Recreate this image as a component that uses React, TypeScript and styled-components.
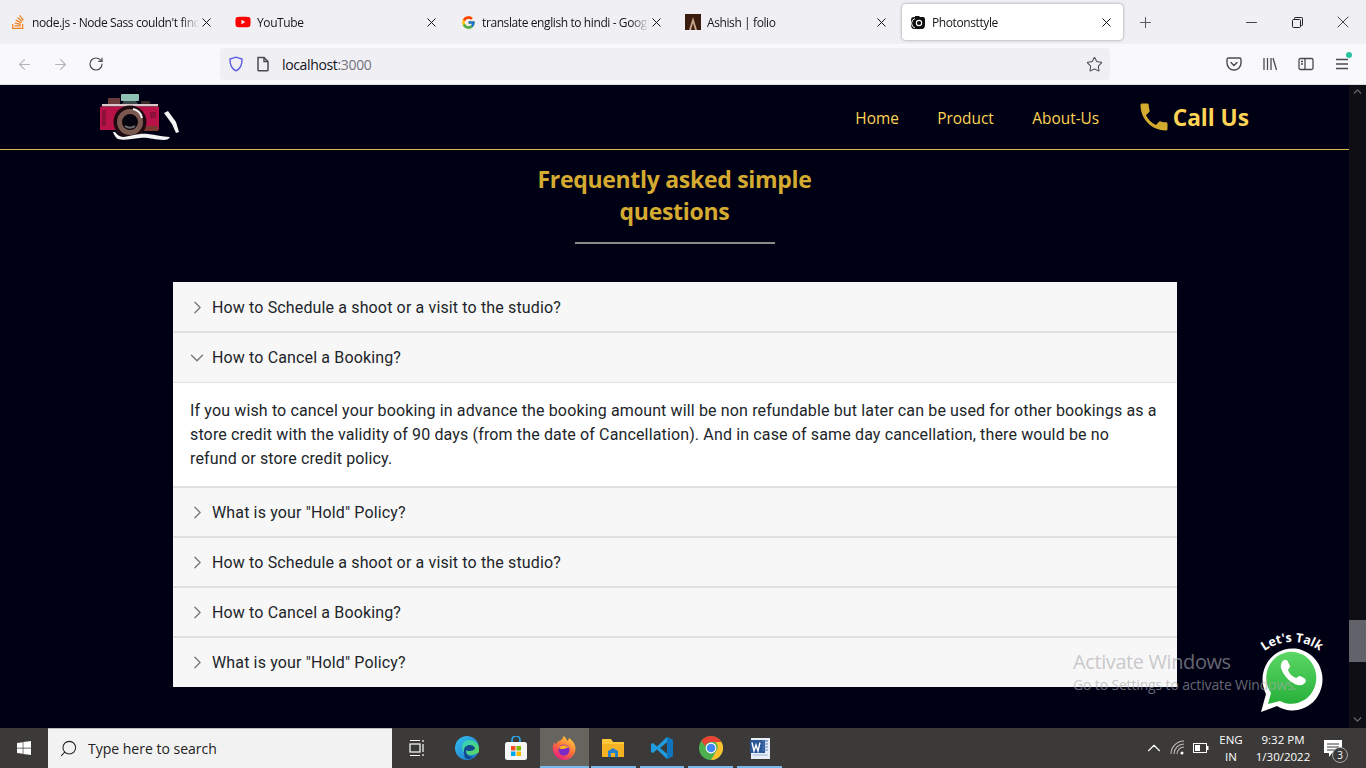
import React from "react";
import styled, { createGlobalStyle } from "styled-components";
import { ChevronRight, ChevronDown, X, Plus, Minus, ArrowLeft, ArrowRight, RotateCw, Star, Search, ChevronUp } from "lucide-react";
import { FaStackOverflow, FaYoutube, FaWindows } from "react-icons/fa";
import { FcGoogle } from "react-icons/fc";
import { MdPhone } from "react-icons/md";

const GlobalStyle = createGlobalStyle`
  html, body { margin: 0; padding: 0; height: 100%; overflow: hidden; background: #000014; }
  * { box-sizing: border-box; }
`;

const Screen = styled.div`
  width: 1366px;
  height: 768px;
  position: relative;
  overflow: hidden;
  display: flex;
  flex-direction: column;
  font-family: "Open Sans", "Liberation Sans", sans-serif;
`;

/* browser chrome */
const TabStrip = styled.div`
  height: 44px;
  flex: none;
  background: #f0f0f4;
  display: flex;
  align-items: center;
  padding: 0 0 0 2px;
`;

const Tab = styled.div<{ $active?: boolean }>`
  width: ${(p) => (p.$active ? "221px" : "225px")};
  height: 36px;
  flex: none;
  display: flex;
  align-items: center;
  gap: 6px;
  padding: 0 ${(p) => (p.$active ? "9px" : "13px")} 0 8px;
  margin-right: ${(p) => (p.$active ? "14px" : "0")};
  border-radius: 4px;
  background: ${(p) => (p.$active ? "#fff" : "transparent")};
  box-shadow: ${(p) => (p.$active ? "0 0 3px rgba(0,0,0,.4)" : "none")};
  color: #15141a;
  font-size: 12px;
`;

const TabIcon = styled.span<{ $color?: string }>`
  width: 16px;
  height: 16px;
  flex: none;
  display: flex;
  align-items: center;
  justify-content: center;
  color: ${(p) => p.$color || "#15141a"};
`;

const TabTitle = styled.span`
  flex: 1;
  min-width: 0;
  white-space: nowrap;
  overflow: hidden;
  letter-spacing: -0.4px;
  mask-image: linear-gradient(to left, transparent 0, #000 18px);
`;

const TabClose = styled(X)`
  flex: none;
  margin-left: -6px;
  color: #15141a;
`;

const NewTab = styled(Plus)`
  flex: none;
  color: #5b5b66;
`;

const WindowButtons = styled.div`
  margin-left: auto;
  display: flex;
  align-items: center;
  color: #222;
`;

const WindowButton = styled.span`
  width: 46px;
  height: 30px;
  display: flex;
  align-items: center;
  justify-content: center;
`;

const Toolbar = styled.div`
  height: 41px;
  flex: none;
  background: #f9f9fb;
  border-bottom: 1px solid #dcdce0;
  display: flex;
  align-items: center;
  padding: 0 0 0 15px;
  color: #5b5b66;
`;

const NavButton = styled.span<{ $muted?: boolean }>`
  width: 36px;
  display: flex;
  justify-content: flex-start;
  padding-left: 1px;
  color: ${(p) => (p.$muted ? "#b4b4ba" : "#4a4a52")};
`;

const UrlBar = styled.div`
  width: 890px;
  height: 32px;
  margin-left: 97px;
  background: #f0f0f4;
  border-radius: 4px;
  display: flex;
  align-items: center;
  padding: 0 7px 0 8px;
  font-size: 14px;
  letter-spacing: -0.35px;
  color: #15141a;
`;

const UrlIcon = styled.span<{ $gap: number }>`
  display: flex;
  margin-right: ${(p) => p.$gap}px;
`;

const UrlHost = styled.span`
  flex: 1;
`;

const UrlPort = styled.span`
  color: #74747c;
`;

const ToolIcons = styled.div`
  display: flex;
  align-items: center;
  margin-left: 116px;
  gap: 20px;
`;

const MenuWrap = styled.span`
  position: relative;
  display: flex;
`;

const MenuDot = styled.span`
  position: absolute;
  top: -4px;
  right: -2px;
  width: 6px;
  height: 6px;
  border-radius: 50%;
  background: #2ac3a2;
`;

/* page */
const Viewport = styled.div`
  flex: 1;
  min-height: 0;
  display: flex;
  background: #000014;
`;

const Page = styled.div`
  flex: 1;
  min-width: 0;
`;

const Header = styled.header`
  height: 65px;
  border-bottom: 1px solid #dcb94e;
  display: flex;
  align-items: center;
  padding: 0 100px 0 100px;
`;

const Links = styled.nav`
  margin-left: auto;
  display: flex;
  align-items: center;
  gap: 38.5px;
  font-size: 15.4px;
  color: #fed455;
`;

const NavLink = styled.span`
  padding-top: 2px;
`;

const CallUs = styled.div`
  display: flex;
  align-items: center;
  gap: 5px;
  margin-left: 3px;
  font-size: 22.7px;
  font-weight: 700;
  color: #fed455;
`;

const PhoneIcon = styled(MdPhone)`
  margin: 0 -4px 0 -5px;
  color: #d3ac2f;
`;

const Title = styled.h2`
  width: 300px;
  margin: 13px auto 0;
  font-size: 23px;
  line-height: 32px;
  font-weight: 700;
  letter-spacing: -0.3px;
  text-align: center;
  color: #d4ab30;
`;

const Rule = styled.div`
  width: 200px;
  height: 2px;
  margin: 15px auto 38px;
  background: #8a8a8a;
`;

const Accordion = styled.div`
  width: 1004px;
  margin-left: 173px;
  font-family: Roboto, sans-serif;
  font-size: 16px;
  letter-spacing: 0.14px;
  color: #212529;
`;

const Question = styled.div<{ $open?: boolean; $first?: boolean; $last?: boolean }>`
  height: ${(p) => (p.$first ? "51px" : p.$last ? "49px" : "50px")};
  display: flex;
  align-items: center;
  gap: 8px;
  padding-left: 17px;
  padding-top: ${(p) => (p.$first ? "1px" : "0")};
  background: #f7f7f7;
  border-bottom: ${(p) => (p.$last ? "0" : p.$open ? "1px solid #e2e2e2" : "2px solid #e0e0e0")};
`;

const Caret = styled.span`
  width: 14px;
  display: flex;
  justify-content: center;
  color: #777;
`;

const CaretRight = styled(ChevronRight)`
  flex: none;
`;

const CaretDown = styled(ChevronDown)`
  flex: none;
`;

const Answer = styled.div`
  height: 105px;
  padding: 16px 19px 0 17px;
  line-height: 24px;
  background: #fff;
  border-bottom: 2px solid #e0e0e0;
`;

const Scrollbar = styled.div`
  width: 17px;
  flex: none;
  background: #0e0e14;
  display: flex;
  flex-direction: column;
  align-items: center;
  color: #6a6a70;
`;

const ScrollThumb = styled.div`
  width: 17px;
  height: 42px;
  margin-top: 522px;
  background: #62626a;
`;

const ScrollEnd = styled.div`
  margin-top: auto;
  display: flex;
  height: 17px;
  align-items: center;
`;

const Watermark = styled.div`
  position: absolute;
  left: 1073px;
  top: 649px;
  color: rgba(170, 170, 175, 0.62);
  font-size: 14px;
  line-height: 19px;
  letter-spacing: -0.15px;
  white-space: nowrap;
  pointer-events: none;
`;

const WatermarkTitle = styled.div`
  font-size: 20px;
  line-height: 26px;
  letter-spacing: -0.4px;
`;

const Chat = styled.div`
  position: absolute;
  left: 1255px;
  top: 628px;
  width: 74px;
  height: 88px;
`;

/* taskbar */
const Taskbar = styled.div`
  height: 40px;
  flex: none;
  background: #3b3a38;
  display: flex;
  align-items: center;
  color: #fff;
`;

const StartButton = styled.span`
  width: 48px;
  display: flex;
  justify-content: center;
`;

const SearchBox = styled.div`
  width: 344px;
  height: 40px;
  background: #f2f2f2;
  border-top: 1px solid #bbb;
  display: flex;
  align-items: center;
  gap: 10px;
  padding-left: 11px;
  color: #222;
  font-size: 14px;
`;

const SearchIcon = styled(Search)`
  transform: scaleX(-1);
`;

const TaskApp = styled.span<{ $running?: boolean; $focused?: boolean }>`
  width: 48.8px;
  height: 40px;
  flex: none;
  position: relative;
  display: flex;
  align-items: center;
  justify-content: center;
  background: ${(p) => (p.$focused ? "#66645f" : "transparent")};

  &::after {
    content: "";
    display: ${(p) => (p.$running ? "block" : "none")};
    position: absolute;
    left: ${(p) => (p.$focused ? "0" : "2px")};
    right: ${(p) => (p.$focused ? "0" : "2px")};
    bottom: 0;
    height: 2px;
    background: #76b9ed;
  }
`;

const TaskViewSlot = styled(TaskApp)`
  width: 50.5px;
`;

const Tray = styled.div`
  margin-left: auto;
  padding-right: 17px;
  display: flex;
  align-items: center;
  font-size: 11.5px;
`;

const TrayIcon = styled.span<{ $w: number }>`
  width: ${(p) => p.$w}px;
  display: flex;
  justify-content: center;
`;

const TrayText = styled.div<{ $w: number }>`
  width: ${(p) => p.$w}px;
  text-align: center;
  line-height: 17px;
`;

const Badge = styled.span`
  position: absolute;
  right: 1px;
  bottom: -6px;
  width: 16px;
  height: 16px;
  border-radius: 50%;
  border: 1px solid #aaa;
  background: #3b3a38;
  font-size: 10px;
  line-height: 14px;
  text-align: center;
`;

const Notify = styled.span`
  width: 32px;
  position: relative;
  display: flex;
  justify-content: center;
`;

const Shield = () => (
  <svg width="16" height="16" viewBox="0 0 16 16" fill="none" stroke="#5a5ce0" strokeWidth="1.4">
    <path d="M8 1.2 14 3c.2 6-1.6 9.8-6 11.8C3.600 12.800 1.800 9 2 3z" />
  </svg>
);

const PageIcon = () => (
  <svg width="14" height="16" viewBox="0 0 14 16" fill="none" stroke="#4a4a52" strokeWidth="1.5">
    <path d="M2 1.500h6l4 4V14a.8.800 0 0 1-.8.800H2.800A.8.800 0 0 1 2 14z" />
    <path d="M8 1.500v4h4" />
  </svg>
);

const Pocket = () => (
  <svg width="16" height="16" viewBox="0 0 16 16" fill="none" stroke="#4a4a52" strokeWidth="1.4">
    <path d="M2.500 2h11A1.500 1.500 0 0 1 15 3.500V7A7 7 0 0 1 1 7V3.500A1.500 1.500 0 0 1 2.500 2z" />
    <path d="M5 6.500 8 9.500l3-3" strokeLinecap="round" />
  </svg>
);

const Library = () => (
  <svg width="16" height="16" viewBox="0 0 16 16" fill="none" stroke="#4a4a52" strokeWidth="1.3">
    <path d="M2 2v12M5.500 2v12M9 2v12M11 2l3.500 12" />
  </svg>
);

const Sidebar = () => (
  <svg width="16" height="16" viewBox="0 0 16 16" fill="none" stroke="#4a4a52" strokeWidth="1.3">
    <rect x="1" y="2.500" width="14" height="11" rx="1.500" />
    <path d="M7 2.500v11M3 5.500h2M3 8h2" />
  </svg>
);

const Burger = () => (
  <svg width="16" height="16" viewBox="0 0 16 16" fill="none" stroke="#4a4a52" strokeWidth="1.4">
    <path d="M2 3.500h12M2 8h12M2 12.500h12" />
  </svg>
);

const Restore = () => (
  <svg width="11" height="11" viewBox="0 0 11 11" fill="none" stroke="#222" strokeWidth="1">
    <rect x=".5" y="2.500" width="8" height="8" rx="1" />
    <path d="M2.500 2.500V1.200A.7.700 0 0 1 3.200.5h6.600a.7.700 0 0 1 .7.700v6.600a.7.700 0 0 1-.7.700H8.500" />
  </svg>
);

const AshishIcon = () => (
  <svg width="16" height="16" viewBox="0 0 16 16">
    <rect width="16" height="16" fill="#3a1c10" />
    <path d="M4 16 8 3l4 13h-2L8 9l-2 7z" fill="#c9a58a" />
  </svg>
);

const CameraFavicon = () => (
  <svg width="16" height="14" viewBox="0 0 16 14" fill="#111">
    <path d="M1 5c0-2 1-3 3-3h1V1h4l1 1h3c2 0 2 2 2 3v5c0 2-1 4-3 4H4c-2 0-3-2-3-4z" />
    <path d="M5 3.500A5 5 0 0 0 5 13" stroke="#fff" strokeWidth="1" fill="none" />
    <circle cx="9" cy="8" r="3.200" fill="#fff" />
    <circle cx="9" cy="8" r="2.100" />
  </svg>
);

const CameraLogo = () => (
  <svg width="80" height="54" viewBox="0 0 80 54">
    <rect x="21" y="4" width="18" height="7" rx="1" fill="#8fc0b4" />
    <path d="M24 11h12l2 3H22z" fill="#3b4a48" />
    <rect x="8" y="8" width="12" height="7" rx="1" fill="#6b3a3a" />
    <rect x="41" y="11" width="9" height="4" rx="1" fill="#3a2a2a" />
    <path d="M2 14h56v2.500H2z" fill="#d8c8c8" />
    <path d="M0 18c0-1 .5-1.500 1.500-1.500h56c1 0 1.500.5 1.500 1.500v22H0z" fill="#b81248" />
    <path d="M2 20h4v16H2zM50 22h6v6h-6z" fill="#8e0f3a" />
    <path d="M38 36h20v5H38z" fill="#7b3a30" />
    <circle cx="30" cy="32" r="16.500" fill="#1e0a10" />
    <circle cx="30" cy="32" r="10.500" fill="none" stroke="#7a5a50" strokeWidth="5" />
    <circle cx="30" cy="32" r="7.500" fill="#05050f" />
    <path d="M25 36c3 2 7 2 10 0" fill="none" stroke="#6d6d70" strokeWidth="2" />
    <path d="M33 19c5 1 8 4 9 9" fill="none" stroke="#f4f4f4" strokeWidth="2" />
    <path d="M15 42c3 4 6 5 9 5 8-1 14-4 24-3 8 .5 14 3 22 3-1 2-3 3-6 3-10 0-16-3-24-2-8 .5-16 3-22 1-2-1-4-4-5-7z" fill="#f4f4f4" />
    <path d="M64 23l4-2 8 11 3 10-3 1-4-9z" fill="#f4f4f4" />
  </svg>
);

const Edge = () => (
  <svg width="24" height="24" viewBox="0 0 24 24">
    <defs>
      <linearGradient id="edgeA" x1="0" y1="0" x2="1" y2="1">
        <stop offset="0" stopColor="#35c1f1" />
        <stop offset="1" stopColor="#1b6fc4" />
      </linearGradient>
      <linearGradient id="edgeB" x1="0" y1="0" x2="1" y2="1">
        <stop offset="0" stopColor="#2fd0c8" />
        <stop offset="1" stopColor="#5fd656" />
      </linearGradient>
    </defs>
    <circle cx="12" cy="12" r="12" fill="url(#edgeA)" />
    <path d="M24 13c0-6-5-9-10-9-4 0-7 3-7 7 0 5 4 8 9 8 3 0 6-1 8-3z" fill="url(#edgeB)" />
    <path d="M9 14c0-3 3-5 6-5 2 0 4 1 5 3 0 2-3 3-6 3-2 0-3-1-3 0 0 3 3 6 7 6-1 1-3 2-5 2-4 0-4-5-4-9z" fill="#134a8e" />
  </svg>
);

const Store = () => (
  <svg width="22" height="24" viewBox="0 0 22 24">
    <path d="M7 7V4a4 4 0 0 1 8 0v3" fill="none" stroke="#28a8ea" strokeWidth="1.600" />
    <rect x="0" y="6" width="22" height="18" rx="2.500" fill="#f6f6f6" />
    <rect x="6" y="10" width="4.500" height="4.500" fill="#f25022" />
    <rect x="11.500" y="10" width="4.500" height="4.500" fill="#7fba00" />
    <rect x="6" y="15.500" width="4.500" height="4.500" fill="#00a4ef" />
    <rect x="11.500" y="15.500" width="4.500" height="4.500" fill="#ffb900" />
  </svg>
);

const Firefox = () => (
  <svg width="24" height="24" viewBox="0 0 24 24">
    <defs>
      <linearGradient id="fox" x1="0.800" y1="0" x2="0.200" y2="1">
        <stop offset="0" stopColor="#ffd43a" />
        <stop offset="0.500" stopColor="#ff7139" />
        <stop offset="1" stopColor="#e31587" />
      </linearGradient>
    </defs>
    <path d="M12 24A11.500 11.500 0 0 1 1 10c.5-2 1-3 2-4 0 1 .3 2 1 2.500C5 6 6.500 5 8 4.500 10 3.500 11 2 11.500 0 15 2 14 4 16 5c0-1 .5-2 1-3 3.500 2.500 6.500 6 6.500 10.500A11.500 11.500 0 0 1 12 24z" fill="url(#fox)" />
    <circle cx="12" cy="14" r="5.500" fill="#7a2ac8" />
    <path d="M7 12c2-3 7-4 10 0-3-1-3 1-6 1-2 0-3 0-4-1z" fill="#ffb020" />
  </svg>
);

const Folder = () => (
  <svg width="22" height="22" viewBox="0 0 22 22">
    <path d="M0 2h9l2 3h11v15H0z" fill="#ffc73a" />
    <rect x="0" y="7" width="22" height="13" fill="#f5b324" />
    <path d="M6 20v-6l5-3 5 3v6h-3v-4H9v4z" fill="#2a80c8" />
  </svg>
);

const VsCode = () => (
  <svg width="24" height="24" viewBox="0 0 24 24">
    <path d="M17 1l6 3v16l-6 3L7 13.500 3 17l-2-1V8l2-1 4 3.500z" fill="#1f9be0" />
    <path d="M17 6.500 10 12l7 5.500z" fill="#3b3a38" />
    <path d="M17 1l6 3v16l-6 3z" fill="#0f74bd" />
    <path d="M17 6.500v11L14.500 15.500V8.500z" fill="#3b3a38" />
  </svg>
);

const Chrome = () => (
  <svg width="24" height="24" viewBox="0 0 24 24">
    <circle cx="12" cy="12" r="12" fill="#4caf50" />
    <path d="M12 0a12 12 0 0 1 10.400 6H12a6 6 0 0 0-5.700 4.200L2.300 4.900A12 12 0 0 1 12 0z" fill="#ea4335" />
    <path d="M22.400 6A12 12 0 0 1 12 24l5.200-9A6 6 0 0 0 16 6z" fill="#fbc02d" />
    <circle cx="12" cy="12" r="5.400" fill="#fff" />
    <circle cx="12" cy="12" r="4.300" fill="#4285f4" />
  </svg>
);

const Word = () => (
  <svg width="24" height="24" viewBox="0 0 24 24">
    <rect x="3" y="2" width="19" height="21" fill="#e8eef7" />
    <path d="M5 5h15M5 19h15" stroke="#9db5d8" strokeWidth="1.200" />
    <rect x="2" y="4" width="15" height="13" fill="#2b5797" />
    <path d="M4 6.500 6 15l2-6 2 6 2-8.500" fill="none" stroke="#fff" strokeWidth="1.400" />
    <path d="M14 5h6M14 8h6M14 11h6M14 14h6" stroke="#5d83bd" strokeWidth="1.200" />
  </svg>
);

const TaskView = () => (
  <svg width="16" height="18" viewBox="0 0 16 18" fill="none" stroke="#fff" strokeWidth="1.200">
    <rect x="1" y="5" width="10" height="8" />
    <path d="M1 1.500h10M1 16.500h10M14 1v2M14 5v8M14 15v2" />
  </svg>
);

const Wifi = () => (
  <svg width="16" height="16" viewBox="0 0 16 16" fill="none" stroke="#ddd" strokeWidth="1.100">
    <path d="M1 14A13 13 0 0 1 14 1M4 14A10 10 0 0 1 14 4M7 14a7 7 0 0 1 7-7" opacity="0.800" />
    <circle cx="12" cy="13" r="1.500" fill="#fff" stroke="none" />
  </svg>
);

const Battery = () => (
  <svg width="16" height="10" viewBox="0 0 16 10">
    <rect x=".5" y=".5" width="13" height="9" fill="none" stroke="#fff" />
    <rect x="2" y="2" width="5" height="6" fill="#fff" />
    <rect x="14" y="3" width="1.500" height="4" fill="#fff" />
  </svg>
);

const Bubble = () => (
  <svg width="18" height="17" viewBox="0 0 18 17">
    <path d="M0 0h18v13H8l-3 4v-4H0z" fill="#fff" />
    <path d="M3 4h12M3 7h12M3 10h8" stroke="#3b3a38" />
  </svg>
);

const WhatsApp = () => (
  <svg width="74" height="88" viewBox="0 0 74 88">
    <defs>
      <linearGradient id="waGreen" x1="0" y1="0" x2="0" y2="1">
        <stop offset="0" stopColor="#5bd766" />
        <stop offset="1" stopColor="#28b03a" />
      </linearGradient>
      <path id="talkArc" d="M2 30A46 46 0 0 1 72 30" />
    </defs>
    <text fill="#fff" fontFamily="Open Sans, sans-serif" fontSize="12.5" fontWeight="700">
      <textPath href="#talkArc" startOffset="50%" textAnchor="middle">Let's Talk</textPath>
    </text>
    <path d="M6 84 11 66A30 31 0 1 1 22 78z" fill="#fff" />
    <path d="M13 76 16 65A25 26 0 1 1 25 73z" fill="url(#waGreen)" />
    <path d="M27 34c2-3 5-3 6 0l2 4c.5 1.500-2 3-2 4 1 3.500 4 6.500 8 8 1 0 2.500-2.500 4-2l4 2c3 1.500 2 5-1 6.500-3 1.500-8 .5-13-3.500-5-4-8-10-9-13-.5-2 0-4 1-6z" fill="#fff" />
  </svg>
);

type TabInfo = { title: string; icon: React.ReactNode; color?: string; active?: boolean };

const tabs: TabInfo[] = [
  { title: "node.js - Node Sass couldn't find a binding", icon: <FaStackOverflow size={16} />, color: "#f48024" },
  { title: "YouTube", icon: <FaYoutube size={16} />, color: "#f00" },
  { title: "translate english to hindi - Google Search", icon: <FcGoogle size={15} /> },
  { title: "Ashish | folio", icon: <AshishIcon /> },
  { title: "Photonsttyle", icon: <CameraFavicon />, active: true },
];

const faqs = [
  { q: "How to Schedule a shoot or a visit to the studio?" },
  {
    q: "How to Cancel a Booking?",
    a: "If you wish to cancel your booking in advance the booking amount will be non refundable but later can be used for other bookings as a store credit with the validity of 90 days (from the date of Cancellation). And in case of same day cancellation, there would be no refund or store credit policy.",
  },
  { q: 'What is your "Hold" Policy?' },
  { q: "How to Schedule a shoot or a visit to the studio?" },
  { q: "How to Cancel a Booking?" },
  { q: 'What is your "Hold" Policy?' },
];

export default function App() {
  return (
    <Screen>
      <GlobalStyle />
      <TabStrip>
        {tabs.map((t) => (
          <Tab key={t.title} $active={t.active}>
            <TabIcon $color={t.color}>{t.icon}</TabIcon>
            <TabTitle>{t.title}</TabTitle>
            <TabClose size={15} strokeWidth={1.6} />
          </Tab>
        ))}
        <NewTab size={17} strokeWidth={1.5} />
        <WindowButtons>
          <WindowButton><Minus size={17} strokeWidth={1.2} /></WindowButton>
          <WindowButton><Restore /></WindowButton>
          <WindowButton><X size={20} strokeWidth={1} /></WindowButton>
        </WindowButtons>
      </TabStrip>

      <Toolbar>
        <NavButton $muted><ArrowLeft size={17} strokeWidth={1.5} /></NavButton>
        <NavButton $muted><ArrowRight size={17} strokeWidth={1.5} /></NavButton>
        <NavButton><RotateCw size={16} strokeWidth={1.8} /></NavButton>
        <UrlBar>
          <UrlIcon $gap={12}><Shield /></UrlIcon>
          <UrlIcon $gap={12}><PageIcon /></UrlIcon>
          <UrlHost>localhost<UrlPort>:3000</UrlPort></UrlHost>
          <Star size={17} strokeWidth={1.5} color="#4a4a52" />
        </UrlBar>
        <ToolIcons>
          <Pocket />
          <Library />
          <Sidebar />
          <MenuWrap><Burger /><MenuDot /></MenuWrap>
        </ToolIcons>
      </Toolbar>

      <Viewport>
        <Page>
          <Header>
            <CameraLogo />
            <Links>
              <NavLink>Home</NavLink>
              <NavLink>Product</NavLink>
              <NavLink>About-Us</NavLink>
              <CallUs><PhoneIcon size={36} />Call Us</CallUs>
            </Links>
          </Header>
          <Title>Frequently asked simple questions</Title>
          <Rule />
          <Accordion>
            {faqs.map((f, i) => (
              <React.Fragment key={i}>
                <Question $open={!!f.a} $first={i === 0} $last={i === faqs.length - 1}>
                  <Caret>{f.a ? <CaretDown size={22} strokeWidth={1.5} /> : <CaretRight size={21} strokeWidth={1.5} />}</Caret>
                  {f.q}
                </Question>
                {f.a && <Answer>{f.a}</Answer>}
              </React.Fragment>
            ))}
          </Accordion>
        </Page>
        <Scrollbar>
          <ChevronUp size={13} strokeWidth={2.5} />
          <ScrollThumb />
          <ScrollEnd><ChevronDown size={13} strokeWidth={2.5} /></ScrollEnd>
        </Scrollbar>
      </Viewport>

      <Taskbar>
        <StartButton><FaWindows size={16} /></StartButton>
        <SearchBox><SearchIcon size={19} strokeWidth={1.3} />Type here to search</SearchBox>
        <TaskViewSlot><TaskView /></TaskViewSlot>
        <TaskApp><Edge /></TaskApp>
        <TaskApp><Store /></TaskApp>
        <TaskApp $running $focused><Firefox /></TaskApp>
        <TaskApp $running><Folder /></TaskApp>
        <TaskApp $running><VsCode /></TaskApp>
        <TaskApp $running><Chrome /></TaskApp>
        <TaskApp $running><Word /></TaskApp>
        <Tray>
          <TrayIcon $w={24}><ChevronUp size={22} strokeWidth={1.2} /></TrayIcon>
          <TrayIcon $w={23}><Wifi /></TrayIcon>
          <TrayIcon $w={24}><Battery /></TrayIcon>
          <TrayText $w={36}>ENG<br />IN</TrayText>
          <TrayText $w={68}>9:32 PM<br />1/30/2022</TrayText>
          <Notify><Bubble /><Badge>3</Badge></Notify>
        </Tray>
      </Taskbar>

      <Chat><WhatsApp /></Chat>
      <Watermark>
        <WatermarkTitle>Activate Windows</WatermarkTitle>
        Go to Settings to activate Windows.
      </Watermark>
    </Screen>
  );
}
